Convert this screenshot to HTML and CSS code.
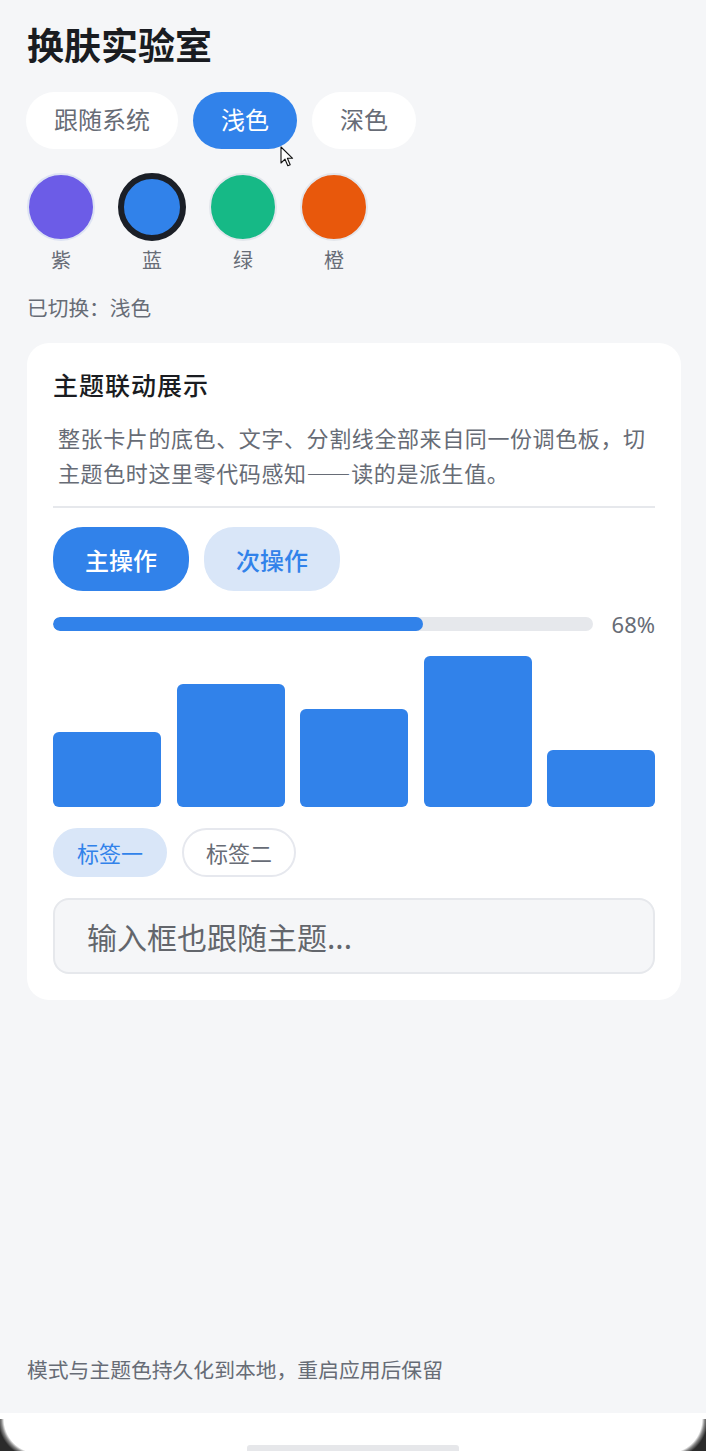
FILE: index.html
```html
<!DOCTYPE html>
<html lang="zh-CN">
<head>
    <meta charset="UTF-8">
    <meta name="viewport" content="width=device-width, initial-scale=1.0">
    <title>换肤实验室</title>
    <link rel="stylesheet" href="styles.css">
</head>
<body>
    <div id="screen">
        <main class="page">
            <h1 class="title">换肤实验室</h1>

            <div class="modes">
                <button class="mode">跟随系统</button>
                <button class="mode active">浅色</button>
                <button class="mode">深色</button>
            </div>

            <div class="swatches">
                <div class="swatch">
                    <span class="dot purple"></span>
                    <span class="swatch-name">紫</span>
                </div>
                <div class="swatch">
                    <span class="dot blue selected"></span>
                    <span class="swatch-name">蓝</span>
                </div>
                <div class="swatch">
                    <span class="dot green"></span>
                    <span class="swatch-name">绿</span>
                </div>
                <div class="swatch">
                    <span class="dot orange"></span>
                    <span class="swatch-name">橙</span>
                </div>
            </div>

            <p class="status">已切换：浅色</p>

            <section class="card">
                <h2 class="card-title">主题联动展示</h2>
                <p class="card-desc">整张卡片的底色、文字、分割线全部来自同一份调色板，切主题色时这里零代码感知——读的是派生值。</p>
                <div class="divider"></div>

                <div class="actions">
                    <button class="btn primary">主操作</button>
                    <button class="btn secondary">次操作</button>
                </div>

                <div class="progress-row">
                    <div class="track"><div class="fill" style="width: 68.5%"></div></div>
                    <span class="percent">68%</span>
                </div>

                <div class="chart">
                    <div class="bar" style="height: 50%"></div>
                    <div class="bar" style="height: 81.25%"></div>
                    <div class="bar" style="height: 65%"></div>
                    <div class="bar" style="height: 100%"></div>
                    <div class="bar" style="height: 37.5%"></div>
                </div>

                <div class="tags">
                    <span class="tag on">标签一</span>
                    <span class="tag">标签二</span>
                </div>

                <input class="field" type="text" placeholder="输入框也跟随主题...">
            </section>

            <p class="footnote">模式与主题色持久化到本地，重启应用后保留</p>

            <!-- mouse pointer left over the light pill -->
            <svg class="cursor" width="14" height="22" viewBox="0 0 14 22">
                <path d="M1 1 L1 17 L5 13.2 L7.8 19.8 L10.2 18.8 L7.4 12.3 L12.6 12.3 Z" fill="#fff" stroke="#111" stroke-width="1.1" stroke-linejoin="round"/>
            </svg>
        </main>

        <div class="navbar">
            <div class="home-bar"></div>
        </div>
        <div class="corner left"></div>
        <div class="corner right"></div>
    </div>
</body>
</html>
```

FILE: styles.css
```css
* {
    box-sizing: border-box;
}
body {
    margin: 0;
    padding: 0;
    font-family: "Noto Sans CJK SC", "Noto Sans", sans-serif;
    background-color: #f5f6f8;
}
#screen {
    position: relative;
    width: 706px;
    height: 1451px;
    overflow: hidden;
    background-color: #f5f6f8;
}
.page {
    position: relative;
    height: 1413px;
    padding: 20px 25px 31px 27px;
    display: flex;
    flex-direction: column;
}
.title {
    margin: 0;
    font-size: 37px;
    line-height: 48px;
    font-weight: 700;
    color: #1a1c21;
}

/* mode pills */
.modes {
    display: flex;
    gap: 16px;
    margin-top: 24px;
}
.mode {
    height: 57px;
    padding: 0 28px 3px;
    margin: 0 0 0 -1px;
    border: none;
    border-radius: 29px;
    background-color: #fff;
    color: #676c76;
    font-family: inherit;
    font-size: 24px;
    line-height: 54px;
}
.mode.active {
    background-color: #3182ea;
    color: #fff;
}

/* theme colour swatches */
.swatches {
    display: flex;
    gap: 23px;
    margin-top: 24px;
}
.swatch {
    display: flex;
    flex-direction: column;
    align-items: center;
    gap: 6px;
}
.dot {
    width: 68px;
    height: 68px;
    border-radius: 50%;
    border: 2px solid #e3e6ec;
}
.dot.selected {
    border: 6px solid #1b1f27;
}
.purple { background-color: #6c5ce7; border-color: #dde3f3; }
.blue { background-color: #3182ea; }
.green { background-color: #16b986; }
.orange { background-color: #e8580c; }
.swatch-name {
    font-size: 20px;
    line-height: 26px;
    color: #676c76;
}
.status {
    margin: 21px 0 0;
    font-size: 20.7px;
    line-height: 26px;
    color: #676c76;
}

/* demo card */
.card {
    width: 654px;
    margin-top: 23px;
    padding: 24px 26px 26px;
    border-radius: 22px;
    background-color: #fff;
}
.card-title {
    margin: 0;
    font-size: 25px;
    line-height: 34px;
    font-weight: 500;
    color: #1a1c21;
    letter-spacing: 1px;
}
.card-desc {
    margin: 19px 0 0;
    padding: 0 2px 0 5px;
    font-size: 22px;
    line-height: 34.5px;
    letter-spacing: 0.6px;
    color: #676c76;
}
.divider {
    height: 2px;
    margin-top: 17px;
    background-color: #e6e8ec;
}
.actions {
    display: flex;
    gap: 15px;
    margin-top: 19px;
}
.btn {
    height: 64px;
    padding: 0 32px;
    border: none;
    border-radius: 30px;
    font-family: inherit;
    font-size: 24px;
    font-weight: 500;
}
.btn.primary {
    background-color: #3182ea;
    color: #fff;
}
.btn.secondary {
    background-color: #d9e6f8;
    color: #3182ea;
}
.progress-row {
    display: flex;
    align-items: center;
    gap: 19px;
    height: 28px;
    margin-top: 19px;
}
.track {
    flex: 1;
    height: 14px;
    border-radius: 7px;
    background-color: #e6e8ec;
    overflow: hidden;
}
.fill {
    height: 100%;
    border-radius: 7px;
    background-color: #3182ea;
}
.percent {
    font-family: "Noto Sans", sans-serif;
    font-size: 22px;
    color: #676c76;
}
.chart {
    display: flex;
    align-items: flex-end;
    gap: 15.5px;
    height: 151px;
    margin-top: 18px;
}
.bar {
    flex: 1;
    border-radius: 6px;
    background-color: #3182ea;
}
.tags {
    display: flex;
    gap: 15px;
    margin-top: 21px;
}
.tag {
    height: 49px;
    padding: 0 22px;
    border: 2px solid #e6e8ee;
    border-radius: 25px;
    font-size: 22px;
    line-height: 45px;
    color: #676c76;
}
.tag.on {
    border-color: #d9e6f8;
    background-color: #d9e6f8;
    color: #3182ea;
}
.field {
    display: block;
    width: 100%;
    height: 76px;
    margin-top: 21px;
    padding: 0 32px;
    border: 2px solid #e6e8ec;
    border-radius: 16px;
    background-color: #f5f6f8;
    font-family: inherit;
    font-size: 30px;
    outline: none;
}
.field::placeholder {
    color: #63666c;
}
.footnote {
    margin: auto 0 0;
    font-size: 20.8px;
    line-height: 26px;
    color: #676c76;
}
.cursor {
    position: absolute;
    left: 280px;
    top: 146px;
}

/* system navigation bar + device corners */
.navbar {
    height: 38px;
    background-color: #fff;
    display: flex;
    justify-content: center;
    align-items: flex-end;
}
.home-bar {
    width: 212px;
    height: 6px;
    border-radius: 3px 3px 0 0;
    background-color: #e6e7ea;
}
.corner {
    position: absolute;
    bottom: 0;
    width: 38px;
    height: 32px;
}
.corner.left {
    left: 0;
    background: radial-gradient(circle 40px at 38px 0, transparent 34px, #8c8c8c 36.5px, #2b2b2b 40px);
}
.corner.right {
    right: 0;
    background: radial-gradient(circle 40px at 0 0, transparent 34px, #8c8c8c 36.5px, #2b2b2b 40px);
}
```
